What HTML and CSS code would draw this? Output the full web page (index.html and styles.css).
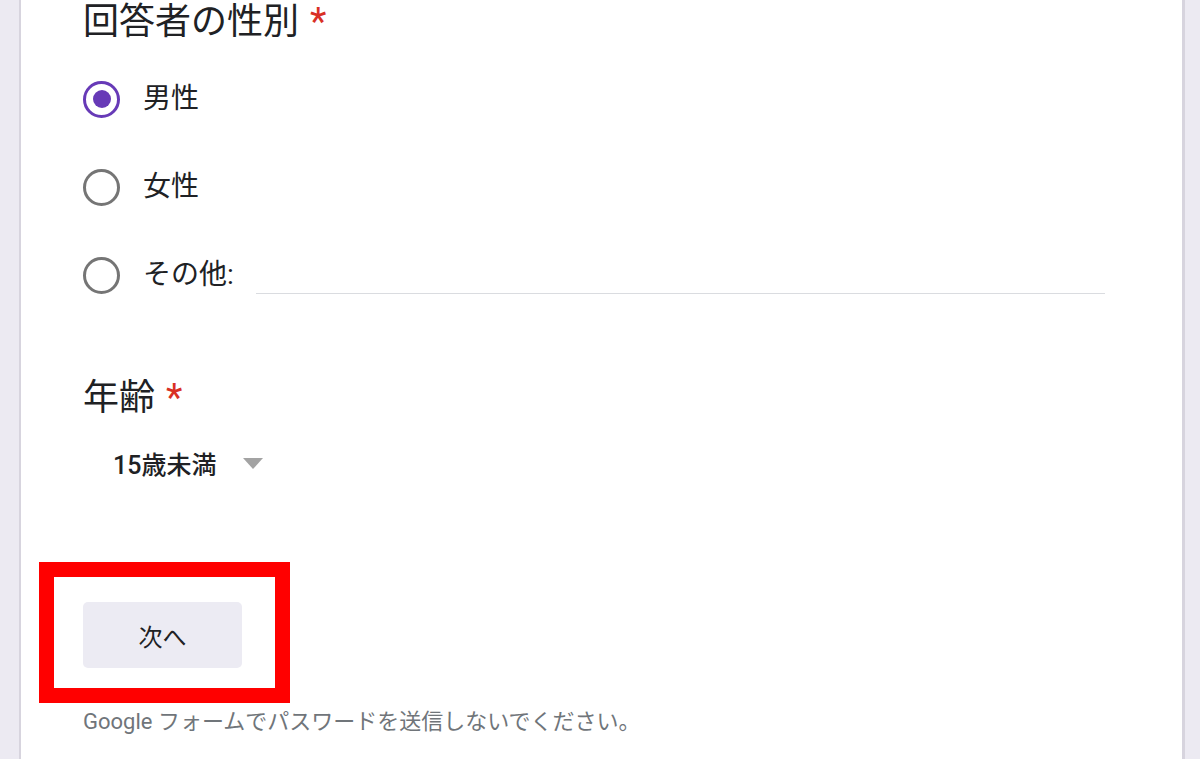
FILE: index.html
```html
<!DOCTYPE html>
<html lang="ja">
<head>
<meta charset="utf-8">
<title>フォーム</title>
<link rel="stylesheet" href="styles.css">
</head>
<body>
<div class="page">
  <div class="card">
    <div class="question">
      <div class="q-title">回答者の性別<span class="req">*</span></div>
      <div class="options">
        <div class="option">
          <span class="radio checked"></span>
          <span class="opt-label">男性</span>
        </div>
        <div class="option">
          <span class="radio"></span>
          <span class="opt-label">女性</span>
        </div>
        <div class="option">
          <span class="radio"></span>
          <span class="opt-label">その他:</span>
          <span class="other-input"></span>
        </div>
      </div>
    </div>
    <div class="question q-age">
      <div class="q-title">年齢<span class="req">*</span></div>
      <div class="select">
        <span class="select-value">15歳未満</span>
        <svg class="select-arrow" width="20" height="11" viewBox="0 0 20 11"><path d="M0 0 L20 0 L10 11 Z" fill="#a3a3a3"/></svg>
      </div>
    </div>
    <div class="nav">
      <div class="highlight">
        <div class="btn">次へ</div>
      </div>
    </div>
    <div class="note">Google フォームでパスワードを送信しないでください。</div>
  </div>
</div>
</body>
</html>
```
FILE: styles.css
```css
html, body {
  margin: 0;
  padding: 0;
  height: 100%;
  overflow: hidden;
}
body {
  background: #eceaf2;
  font-family: Roboto, "Noto Sans CJK JP", sans-serif;
  color: #202124;
}
.page {
  display: flex;
  height: 100%;
  padding: 0 15px 0 19px;
  box-sizing: border-box;
}
.card {
  flex: 1;
  background: #ffffff;
  border-left: 2px solid #d7d4de;
  border-right: 3px solid #d7d4de;
  padding: 0 77px 0 62px;
  display: flex;
  flex-direction: column;
}
.q-title {
  font-size: 36px;
  line-height: 44px;
  height: 44px;
  color: #202124;
  display: flex;
  align-items: center;
}
.req {
  color: #d93025;
  margin-left: 11px;
  font-size: 38px;
  line-height: 44px;
}
.options {
  margin-top: 11px;
  display: flex;
  flex-direction: column;
}
.option {
  height: 88px;
  display: flex;
  align-items: center;
}
.radio {
  width: 37px;
  height: 37px;
  box-sizing: border-box;
  border: 3.5px solid #757575;
  border-radius: 50%;
  flex: none;
  display: flex;
  align-items: center;
  justify-content: center;
}
.radio.checked {
  border-color: #673ab7;
}
.radio.checked::after {
  content: "";
  width: 18px;
  height: 18px;
  border-radius: 50%;
  background: #673ab7;
}
.opt-label {
  margin-left: 23px;
  font-size: 28px;
  line-height: 36px;
  color: #202124;
}
.other-input {
  flex: 1;
  margin-left: 22px;
  height: 36px;
  border-bottom: 1px solid #dadce0;
}
.q-age {
  margin-top: 57px;
}
.select {
  margin-top: 23px;
  height: 40px;
  padding-left: 30px;
  display: flex;
  align-items: center;
}
.select-value {
  font-size: 25px;
  font-weight: 500;
  color: #202124;
}
.select-arrow {
  margin-left: 27px;
}
.nav {
  margin-top: 79px;
  display: flex;
}
.highlight {
  margin-left: -44px;
  border: 15px solid #ff0000;
  padding: 25px 33px 20px 29px;
  display: flex;
}
.btn {
  width: 159px;
  height: 66px;
  border-radius: 5px;
  background: #ecebf3;
  display: flex;
  align-items: center;
  justify-content: center;
  font-size: 24px;
  color: #202124;
}
.note {
  margin-top: 5px;
  font-size: 22px;
  line-height: 28px;
  color: #70757a;
}
```
